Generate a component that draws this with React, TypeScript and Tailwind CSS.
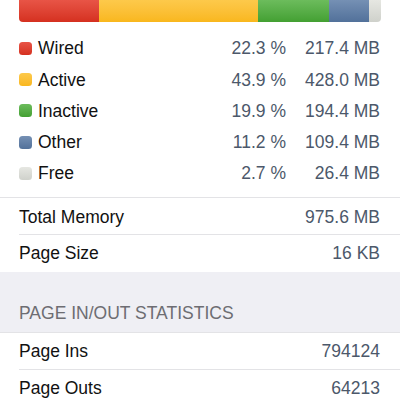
const segments = [
  { name: "Wired", pct: "22.3 %", size: "217.4 MB", width: 80, bar: "bg-gradient-to-b from-[#e85446] to-[#d5301f]" },
  { name: "Active", pct: "43.9 %", size: "428.0 MB", width: 159, bar: "bg-gradient-to-b from-[#fdc94a] to-[#f9b71c]" },
  { name: "Inactive", pct: "19.9 %", size: "194.4 MB", width: 71, bar: "bg-gradient-to-b from-[#6cbc5c] to-[#43a032]" },
  { name: "Other", pct: "11.2 %", size: "109.4 MB", width: 40, bar: "bg-gradient-to-b from-[#7590b4] to-[#52719a]" },
  { name: "Free", pct: "2.7 %", size: "26.4 MB", width: 12, bar: "bg-gradient-to-b from-[#e6e7e2] to-[#cfd1cb]" },
];

function Row({ label, value, divider }: { label: string; value: string; divider?: boolean }) {
  return (
    <div className="pl-[19px] bg-white">
      <div className={"flex items-center justify-between pr-[20px] h-[37px] " + (divider ? "border-b border-[#e3e3e6]" : "")}>
        <span className="text-[17.5px] text-[#111]">{label}</span>
        <span className="text-[17.5px] text-[#4c586a]">{value}</span>
      </div>
    </div>
  );
}

export default function App() {
  return (
    <div className="w-[400px] h-[400px] overflow-hidden bg-white font-['Liberation_Sans',Arial,sans-serif]">
      {/* usage bar */}
      <div className="px-[19px]">
        <div className="flex h-[22px] rounded-b-[4px] overflow-hidden">
          {segments.map((s) => (
            <div key={s.name} className={s.bar} style={{ width: s.width }} />
          ))}
        </div>
      </div>

      {/* legend */}
      <div className="mt-[11px] pb-[8px] pl-[19px] border-b border-[#e3e3e6]">
        {segments.map((s) => (
          <div key={s.name} className="flex items-center h-[31.2px] pr-[20px]">
            <div className={"w-[13px] h-[13px] rounded-[3.5px] " + s.bar} />
            <span className="ml-[6px] text-[17.5px] text-[#111] flex-1">{s.name}</span>
            <span className="text-[17.5px] text-[#4c586a]">{s.pct}</span>
            <span className="w-[94px] text-right text-[17.5px] text-[#4c586a]">{s.size}</span>
          </div>
        ))}
      </div>

      <div className="pl-[19px]">
        <div className="flex items-center justify-between pr-[20px] h-[37px] pt-[2px] border-b border-[#e3e3e6]">
          <span className="text-[17.5px] text-[#111]">Total Memory</span>
          <span className="text-[17.5px] text-[#4c586a]">975.6 MB</span>
        </div>
      </div>
      <Row label="Page Size" value="16 KB" />

      {/* section header */}
      <div className="bg-[#efeff4] h-[61px] flex items-end pl-[19px] pb-[6px] border-b border-[#e3e3e6]">
        <span className="text-[17.5px] text-[#6d6d72]">PAGE IN/OUT STATISTICS</span>
      </div>

      <Row label="Page Ins" value="794124" divider />
      <Row label="Page Outs" value="64213" />
    </div>
  );
}
